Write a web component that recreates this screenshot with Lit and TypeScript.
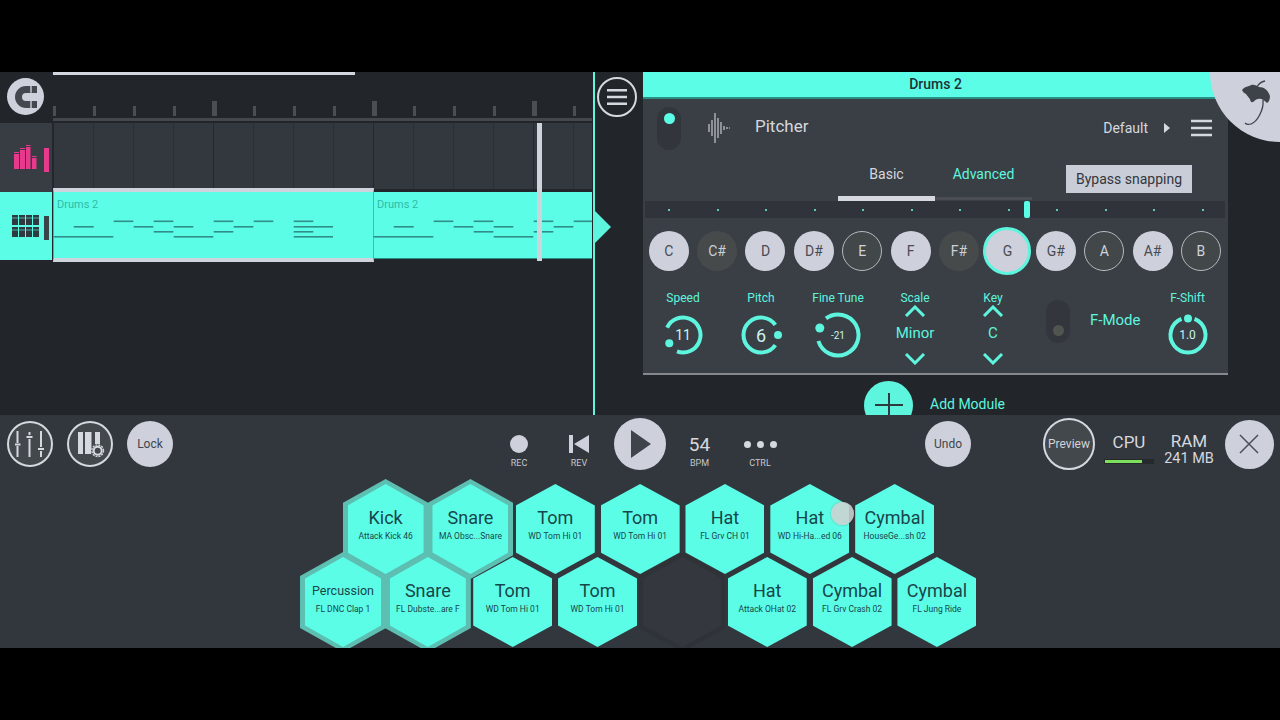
import { LitElement, html, css, svg } from "lit";
import { customElement } from "lit/decorators.js";

const NOTES: [number, number, number][] = [
  [220.5, 113.7, 133.3], [220.5, 153.7, 173.3], [220.5, 213.7, 233.3], [220.5, 253.7, 273.3], [220.5, 293.7, 313.3],
  [226, 73.7, 93.7], [226, 133.7, 153.3], [226, 173.7, 193.3], [226, 233.7, 253.3], [226, 293.7, 333],
  [231, 153.7, 173.3], [231, 213.7, 233.3], [231, 293.7, 313.3],
  [236, 53.7, 113.3], [236, 173.7, 213.3], [236, 293.7, 333],
];

const KEYS: [string, string][] = [
  ["C", "on"], ["C#", "dim"], ["D", "on"], ["D#", "on"], ["E", "out"], ["F", "on"],
  ["F#", "dim"], ["G", "sel"], ["G#", "on"], ["A", "out"], ["A#", "on"], ["B", "out"],
];

const ROW1: [string, string, boolean][] = [
  ["Kick", "Attack Kick 46", true], ["Snare", "MA Obsc...Snare", true], ["Tom", "WD Tom Hi 01", false],
  ["Tom", "WD Tom Hi 01", false], ["Hat", "FL Grv CH 01", false], ["Hat", "WD Hi-Ha...ed 06", false],
  ["Cymbal", "HouseGe...sh 02", false],
];
const ROW2: ([string, string, boolean] | null)[] = [
  ["Percussion", "FL DNC Clap 1", true], ["Snare", "FL Dubste...are F", true], ["Tom", "WD Tom Hi 01", false],
  ["Tom", "WD Tom Hi 01", false], null, ["Hat", "Attack OHat 02", false], ["Cymbal", "FL Grv Crash 02", false],
  ["Cymbal", "FL Jung Ride", false],
];

const hamburger = html`<svg width="21" height="18" viewBox="0 0 21 18"><path d="M0 2h21M0 9h21M0 16h21" stroke="#d5d8df" stroke-width="2.6"/></svg>`;

const up = html`<svg width="22" height="12" viewBox="0 0 22 12"><path d="M2 11 11 2l9 9" fill="none" stroke="#5ef5df" stroke-width="3"/></svg>`;
const down = html`<svg width="22" height="12" viewBox="0 0 22 12"><path d="M2 1l9 9 9-9" fill="none" stroke="#5ef5df" stroke-width="3"/></svg>`;

function knob(size: number, r: number, sw: number, from: number, to: number, dotA: number, dotD: number, dotR: number, cls: string, value: string, top: number) {
  const c = size / 2;
  const p = (a: number, d: number) => [c + d * Math.sin((a * Math.PI) / 180), c - d * Math.cos((a * Math.PI) / 180)];
  const [x1, y1] = p(from, r);
  const [x2, y2] = p(to, r);
  const [dx, dy] = p(dotA, dotD);
  const large = (to - from + 360) % 360 > 180 ? 1 : 0;
  return html`<div class="knob" style="width:${size}px;height:${size}px;margin-top:${top}px">
    <svg width=${size} height=${size} viewBox="0 0 ${size} ${size}">
      <path d="M${x1} ${y1}A${r} ${r} 0 ${large} 1 ${x2} ${y2}" fill="none" stroke="#5ef5df" stroke-width=${sw}/>
      <circle cx=${dx} cy=${dy} r=${dotR} fill="#5ef5df"/>
    </svg>
    <span class=${cls}>${value}</span>
  </div>`;
}

@customElement("app-root")
export class AppRoot extends LitElement {
  static styles = css`
    :host { display: block; box-sizing: border-box; padding-top: 72px; background: #000; font-family: Roboto, "Liberation Sans", sans-serif; width: 1280px; height: 720px; overflow: hidden; }
    .stage { position: relative; height: 576px; overflow: hidden; background: #22262b; }
    .upper { display: flex; height: 343px; overflow: hidden; background: #22262b; }

    .timeline { width: 592px; margin-right: 1px; flex: none; position: relative; display: flex; flex-direction: column; overflow: hidden; }
    .ruler-row { display: flex; height: 51px; flex: none; }
    .magnet-cell { width: 53px; flex: none; display: flex; align-items: flex-start; padding: 6px 0 0 7px; box-sizing: border-box; }
    .magnet { width: 37px; height: 37px; border-radius: 50%; background: #ced1dc; display: flex; align-items: center; justify-content: center; }
    .ruler { flex: 1; min-width: 0; overflow: hidden; display: flex; flex-direction: column; background: #22262b; }
    .loopbar { width: 302px; height: 3px; background: #d4d7df; flex: none; }
    .ticks { display: flex; height: 41px; align-items: flex-end; flex: none; }
    .tickcell { width: 40px; flex: none; }
    .tick { width: 2.5px; height: 10.500px; background: #4b4f54; }
    .tick.big { width: 5px; height: 15.500px; margin-left: -1.500px; }
    .rule { height: 3px; margin-top: 2px; background: #44484d; flex: none; }

    .track { display: flex; height: 69px; flex: none; }
    .head { width: 52px; flex: none; background: #383c43; display: flex; align-items: center; gap: 5px; padding-left: 12px; box-sizing: border-box; }
    .grid { flex: 1; margin-left: 1px; height: 66px; background-color: #33373e;
      background-image: linear-gradient(90deg, #24272c 1px, transparent 1px), linear-gradient(90deg, #2b2e34 1px, transparent 1px);
      background-size: 160px 100%, 40px 100%; }
    .track.cy { height: 72px; margin-top: -1px; }
    .track.cy .head { background: #5cfde6; height: 68px; margin-top: 1px; }
    .clips { flex: 1; min-width: 0; position: relative; margin-left: 1px; display: flex; }
    .clip { width: 321px; flex: none; height: 74px; margin-top: -3px; box-sizing: border-box; border-top: 4px solid #cfd3dc; border-bottom: 4px solid #cfd3dc; background: #5cfde6; border-left: 1px solid #7c9a98; border-right: 1px solid #49b8a8; color: #2fbba9; font-size: 11px; padding: 6px 0 0 3px; }
    .clip.b { flex: 1; width: auto; min-width: 0; box-sizing: border-box; height: 67px; margin-top: 1px; padding: 6px 0 0 3px; border-top: none; border-left: none; border-right: none; border-bottom: 1px solid #2a8e83; }
    .notes { position: absolute; left: 0; top: -3px; }
    .playhead { position: absolute; left: 537px; top: 51px; width: 5px; height: 138px; background: #cfd3dc; }

    .divider { width: 2px; flex: none; background: #5ef5df; }
    .side { flex: 1; display: flex; min-width: 0; }
    .gutter { width: 48px; flex: none; padding: 5px 0 0 2px; box-sizing: border-box; }
    .menu { width: 40px; height: 40px; box-sizing: border-box; border: 2px solid #d5d8df; border-radius: 50%; display: flex; align-items: center; justify-content: center; }
    .menu svg { width: 20px; }
    .mid { width: 585px; flex: none; display: flex; flex-direction: column; }
    .panel { height: 303px; flex: none; background: #3a3f46; border-bottom: 2px solid #85888c; box-sizing: border-box; display: flex; flex-direction: column; color: #d5d8df; }
    .title { height: 27px; flex: none; background: #5cfde6; border-bottom: 2px solid #2a8e83; padding-bottom: 1px; box-sizing: border-box; color: #1d3336; font-size: 14px; font-weight: 500; display: flex; align-items: center; justify-content: center; }
    .modhead { height: 54px; flex: none; display: flex; align-items: center; padding: 3px 16px 0 14px; box-sizing: border-box; }
    .toggle { width: 24px; height: 43px; border-radius: 12px; background: #32363c; flex: none; display: flex; flex-direction: column; align-items: center; padding-top: 6px; box-sizing: border-box; }
    .toggle i { width: 11px; height: 11px; border-radius: 50%; background: #5cfde6; }
    .modhead .toggle { margin-top: 1px; }
    .toggle.off { background: #33373d; padding-top: 25px; margin: 16px 0 0 13px; }
    .toggle.off i { background: #51554f; }
    .wave { margin-left: 27px; flex: none; }
    .name { margin: -3px 0 0 25px; font-size: 17px; }
    .default { margin-left: auto; font-size: 14px; }
    .tri { margin-left: 16px; margin-right: 21px; width: 0; height: 0; border-left: 6px solid #d5d8df; border-top: 5.5px solid transparent; border-bottom: 5.5px solid transparent; }
    .tabs { height: 48px; flex: none; display: flex; align-items: flex-start; padding-left: 195px; }
    .tab { width: 97px; height: 47px; box-sizing: border-box; border-bottom: 3px solid #4a4e54; display: flex; align-items: center; justify-content: center; font-size: 14px; padding-bottom: 2px; color: #5ef5df; }
    .tab.on { height: 48px; color: #d5d8df; border-bottom: 5px solid #d5d8df; padding-bottom: 1px; }
    .bypass { margin: 12px 0 0 34px; width: 126px; height: 28px; background: #c9cdd7; color: #32363c; font-size: 14px; display: flex; align-items: center; justify-content: center; }
    .strip { height: 17px; flex: none; margin: 0 3px 0 2px; background: #30343a; position: relative; display: grid; grid-template-columns: repeat(12, 48.5px); }
    .strip span { display: flex; align-items: center; justify-content: center; }
    .strip span::before { content: ""; width: 2px; height: 2px; background: #5ec9b9; }
    .strip .handle { position: absolute; left: 379px; top: 0; width: 6px; height: 17px; background: #5cfde6; border-radius: 2px; }
    .keys { display: grid; grid-template-columns: repeat(12, 48.4px); padding-left: 1.5px; height: 66px; flex: none; align-items: center; justify-items: center; }
    .key { width: 40px; height: 40px; box-sizing: border-box; border-radius: 50%; display: flex; align-items: center; justify-content: center; font-size: 14px; }
    .key.on { background: #ced1dc; color: #474b53; }
    .key.dim { background: #464a4b; color: #cdd0d6; }
    .key.out { background: #42474a; border: 1px solid #b6b9be; color: #d0d3d9; }
    .key.sel { width: 48px; height: 48px; background: #ced1dc; border: 3px solid #5ef5df; color: #474b53; }
    .ctrls { flex: 1; display: flex; color: #5ef5df; }
    .c { flex: none; display: flex; flex-direction: column; align-items: center; font-size: 12px; }
    .c label { height: 14px; line-height: 14px; margin-top: 7px; white-space: nowrap; }
    .knob { position: relative; display: flex; align-items: center; justify-content: center; }
    .knob svg { position: absolute; inset: 0; }
    .knob span { color: #c9f3ec; position: relative; }
    .v14 { font-size: 14px; }
    .v17 { font-size: 18px; }
    .v10 { font-size: 10px; }
    .v12 { font-size: 12px; }
    .stepper { display: flex; flex-direction: column; align-items: center; }
    .stepper b { font-weight: 400; font-size: 15px; line-height: 18px; margin: 7px 0 11px; }
    .fmode { font-size: 15px; margin: 27px 0 0 20px; white-space: nowrap; line-height: 18px; width: 50px; flex: none; }
    .addrow { display: flex; align-items: flex-start; height: 40px; padding: 6px 0 0 221px; color: #5ef5df; font-size: 14px; }
    .plus { width: 49px; height: 49px; border-radius: 50%; background: #5ef5df; flex: none; display: flex; align-items: flex-start; justify-content: center; }
    .addrow span { margin: 15px 0 0 17px; }

    .fruit { position: absolute; right: 0; top: 0; width: 70px; height: 70px; background: #ced1dc; border-bottom-left-radius: 70px; }
    .arrow { position: absolute; left: 594px; top: 138px; width: 0; height: 0; border-left: 17px solid #5ef5df; border-top: 17px solid transparent; border-bottom: 17px solid transparent; }

    .lower { height: 233px; background: #32373d; }
    .tb { display: flex; height: 58px; align-items: center; color: #c4c7cc; }
    .rnd { flex: none; box-sizing: border-box; border-radius: 50%; width: 46px; height: 46px; display: flex; align-items: center; justify-content: center; font-size: 12px; }
    .rnd.light { background: #ced1dc; color: #40454c; }
    .rnd.ring { border: 2px solid #d5d8df; background: #43484c; color: #d0d3d9; }
    .col { flex: none; width: 40px; align-self: stretch; display: flex; flex-direction: column; align-items: center; padding-top: 20px; box-sizing: border-box; }
    .col .ic { height: 18px; display: flex; align-items: center; justify-content: center; gap: 6px; }
    .col small { font-size: 9px; line-height: 10px; margin-top: 5px; color: #c4c7cc; }
    .rec { width: 18px; height: 18px; border-radius: 50%; background: #ced1dc; }
    .dot { width: 7px; height: 7px; border-radius: 50%; background: #d5d8df; }
    .bpm { font-size: 19px; color: #d5d8df; }
    .stat { flex: none; display: flex; flex-direction: column; align-items: center; color: #d5d8df; margin-top: 10px; }
    .stat .t { font-size: 17px; line-height: 20px; }
    .meter { width: 50px; height: 5px; margin: 7px 0 3px; background: #25292c; display: flex; align-items: center; padding-left: 1px; box-sizing: border-box; }
    .meter i { display: block; width: 37px; height: 3px; background: #7ce05c; }
    .stat .m { font-size: 14.5px; line-height: 17px; margin-top: -1px; }

    .hexrow { display: flex; height: 73px; }
    .r1 { margin: 11px 0 0 343.2px; }
    .r2 { margin-left: 300.6px; }
    .cell { width: 84.85px; height: 90px; flex: none; display: flex; align-items: center; justify-content: center; }
    .hex { width: 79px; height: 90px; flex: none; background: #5cfde6; clip-path: polygon(50% 0, 100% 24%, 100% 76%, 50% 100%, 0 76%, 0 24%); display: flex; flex-direction: column; align-items: center; padding-top: 22px; box-sizing: border-box; color: #17464a; }
    .hex b { font-weight: 400; font-size: 18px; line-height: 24px; white-space: nowrap; }
    .hex b.sm { font-size: 12.5px; }
    .hex small { font-size: 8.5px; line-height: 12px; white-space: nowrap; }
    .outer { width: 86px; height: 100px; flex: none; background: #5dbeb2; clip-path: polygon(50% 0, 100% 24%, 100% 76%, 50% 100%, 0 76%, 0 24%); display: flex; align-items: center; justify-content: center; }
    .outer .hex { width: 76px; }
    .outer.empty { background: #2f3338; }
    .outer.empty .hex { background: #34383e; width: 78px; }
    .touch { position: absolute; left: 831px; top: 430px; width: 23px; height: 23px; border-radius: 50%; background: rgba(206, 210, 210, .88); box-shadow: 0 0 2px rgba(0,0,0,.3); }
  `;

  private notes(offset: number) {
    return NOTES.map(([y, a, b]) => svg`<rect x=${a - 53 + offset} y=${y - 188} width=${b - a} height="1.6" fill="#2f8f86"/>`);
  }

  private hex(h: [string, string, boolean] | null) {
    if (!h) return html`<div class="cell"><div class="outer empty"><div class="hex"></div></div></div>`;
    const [t, s, sel] = h;
    const body = html`<div class="hex"><b class=${t.length > 8 ? "sm" : ""}>${t}</b><small>${s}</small></div>`;
    return html`<div class="cell">${sel ? html`<div class="outer">${body}</div>` : body}</div>`;
  }

  render() {
    const ticks = Array.from({ length: 14 }, (_, i) => html`<div class="tickcell"><div class=${(i % 4 === 0 && i > 0) ? "tick big" : "tick"}></div></div>`);
    return html`
      <div class="stage">
        <div class="upper">
          <div class="timeline">
            <div class="ruler-row">
              <div class="magnet-cell"><div class="magnet">
                <svg width="24" height="24" viewBox="0 0 24 24"><path d="M23 1H12A11 11 0 0 0 12 23H23V16H12A4 4 0 0 1 12 8H23Z" fill="#44484e"/><path d="M17 0.5v7.3M17 16v7.5" stroke="#ced1dc" stroke-width="1.4"/></svg>
              </div></div>
              <div class="ruler">
                <div class="loopbar"></div>
                <div class="ticks">${ticks}</div>
                <div class="rule"></div>
              </div>
            </div>
            <div class="track">
              <div class="head">
                <svg width="27" height="24" viewBox="0 0 27 24" style="margin-top:-2px" fill="#e73a8d"><path d="M2 9h5v15H2zM2 7h5v1H2zM8 5h5v19H8zM8 3h5v1H8zM14 2h4.500v22H14zM14 0h4.500v1H14zM20 13h4.500v11H20zM20 11h4.500v1H20z"/></svg>
                <svg width="5" height="24" viewBox="0 0 5 24" style="margin-top:5px"><rect width="5" height="24" fill="#e73a8d"/></svg>
              </div>
              <div class="grid"></div>
            </div>
            <div class="track cy">
              <div class="head">
                <svg width="27" height="22" viewBox="0 0 27 22" fill="#2f3a40"><path d="M0 0h6v10H0zM7 0h6v10H7zM14 0h6v10h-6zM21 0h6v10h-6zM0 12h6v10H0zM7 12h6v10H7zM14 12h6v10h-6zM21 12h6v10h-6z"/><path d="M0 3h27M0 15h27" stroke="#5cfde6" stroke-width=".6"/></svg>
                <svg width="5" height="24" viewBox="0 0 5 24" style="margin-top:4px"><rect width="5" height="24" fill="#3a434a"/></svg>
              </div>
              <div class="clips">
                <div class="clip">Drums 2</div>
                <div class="clip b">Drums 2</div>
                <svg class="notes" width="539" height="74" viewBox="0 0 539 74">${this.notes(0)}${this.notes(320)}</svg>
              </div>
            </div>
            <div class="playhead"></div>
          </div>
          <div class="divider"></div>
          <div class="side">
            <div class="gutter"><div class="menu">${hamburger}</div></div>
            <div class="mid">
              <div class="panel">
                <div class="title">Drums 2</div>
                <div class="modhead">
                  <div class="toggle"><i></i></div>
                  <svg class="wave" width="22" height="30" viewBox="0 0 22 30" stroke="#c5c8ce" stroke-width="1.2"><path d="M1 11v8M4 7v16M7 0v30M10 5v20M13 9v12M16 13v4M19 14v2M21.500 14.500v1"/></svg>
                  <div class="name">Pitcher</div>
                  <div class="default">Default</div>
                  <div class="tri"></div>
                  ${hamburger}
                </div>
                <div class="tabs">
                  <div class="tab on">Basic</div>
                  <div class="tab">Advanced</div>
                  <div class="bypass">Bypass snapping</div>
                </div>
                <div class="strip">
                  ${Array.from({ length: 12 }, () => html`<span></span>`)}
                  <div class="handle"></div>
                </div>
                <div class="keys">
                  ${KEYS.map(([k, s]) => html`<div class="key ${s}">${k}</div>`)}
                </div>
                <div class="ctrls">
                  <div class="c" style="width:80px"><label>Speed</label>${knob(44, 17.5, 4, -65, 200, 239, 16, 4, "v14", "11", 8)}</div>
                  <div class="c" style="width:76px"><label>Pitch</label>${knob(44, 17.5, 4, 125, 55, 90, 17, 4, "v17", "6", 8)}</div>
                  <div class="c" style="width:78px"><label>Fine Tune</label>${knob(48, 20.5, 4, -36, 253, 291, 19.5, 4.5, "v10", "-21", 6)}</div>
                  <div class="c" style="width:76px"><label>Scale</label>
                    <div class="stepper">${up}<b>Minor</b>${down}</div>
                  </div>
                  <div class="c" style="width:80px"><label>Key</label>
                    <div class="stepper">${up}<b>C</b>${down}</div>
                  </div>
                  <div class="toggle off"><i></i></div>
                  <div class="fmode">F-Mode</div>
                  <div class="c" style="width:60px;margin-left:17.500px"><label>F-Shift</label>${knob(44, 17.5, 4, 22, 338, 0, 16.5, 4, "v12", "1.0", 8)}</div>
                </div>
              </div>
              <div class="addrow">
                <div class="plus"><svg width="30" height="34" viewBox="0 0 30 34" style="margin-top:11px"><path d="M1 13h28M15 1v33" stroke="#2e3a3d" stroke-width="2"/></svg></div>
                <span>Add Module</span>
              </div>
            </div>
          </div>
        </div>
        <div class="lower">
          <div class="tb">
            <div class="rnd ring" style="margin-left:7px">
              <svg width="30" height="28" viewBox="0 0 30 28" stroke="#d5d8df" stroke-width="2"><path d="M2.500 1v12M2.500 16v11M14.500 2v3M14.500 9v18M26 1v16M26 21v6"/><path d="M-.5 14.500h6M11.500 7h6M23 19h6"/></svg>
            </div>
            <div class="rnd ring" style="margin-left:14px">
              <svg width="30" height="32" viewBox="0 0 30 32"><path d="M3 4h5v22H3zM10 4h6.500v17h-.500v5h-6zM20 4h5v12h-5z" fill="#d5d8df"/><circle cx="22.700" cy="22.700" r="4" fill="none" stroke="#d5d8df" stroke-width="2"/><circle cx="22.700" cy="22.700" r="5.800" fill="none" stroke="#d5d8df" stroke-width="1.400" stroke-dasharray="2 1.040"/></svg>
            </div>
            <div class="rnd light" style="margin-left:14px">Lock</div>
            <div class="col" style="margin-left:326px"><div class="ic"><div class="rec"></div></div><small>REC</small></div>
            <div class="col" style="margin-left:20px"><div class="ic"><svg width="22" height="18" viewBox="0 0 22 18" fill="#ced1dc"><path d="M1 0h4v18H1zM21 0v18L6 9z"/></svg></div><small>REV</small></div>
            <div class="rnd light" style="margin-left:15px;width:52px;height:52px"><svg width="20" height="28" viewBox="0 0 20 28" style="margin-left:2px"><path d="M0 0 20 14 0 28Z" fill="#3f444c"/></svg></div>
            <div class="col" style="margin-left:13.500px"><div class="ic"><span class="bpm">54</span></div><small>BPM</small></div>
            <div class="col" style="margin-left:20.500px"><div class="ic"><i class="dot"></i><i class="dot"></i><i class="dot"></i></div><small>CTRL</small></div>
            <div class="rnd light" style="margin-left:145px">Undo</div>
            <div class="rnd ring" style="margin-left:72px;width:52px;height:52px">Preview</div>
            <div class="stat" style="margin-left:9px;width:50px"><span class="t">CPU</span><div class="meter"><i></i></div></div>
            <div class="stat" style="margin-left:5px;width:60px"><span class="t">RAM</span><span class="m">241 MB</span></div>
            <div class="rnd light" style="margin-left:5.500px;width:49px;height:49px"><svg width="20" height="20" viewBox="0 0 20 20"><path d="M1 1l18 18M19 1 1 19" stroke="#4a4e56" stroke-width="1.500"/></svg></div>
          </div>
          <div class="hexrow r1">${ROW1.map((h) => this.hex(h))}</div>
          <div class="hexrow r2">${ROW2.map((h) => this.hex(h))}</div>
        </div>
        <div class="arrow"></div>
        <div class="fruit">
          <svg width="70" height="70" viewBox="0 0 70 70"><path d="M32 18C35 14 38 15 41 13C44 12 47 14 49 15C54 15 58 18 60 24C60 27 59 30 57 31C54 28 51 26 48 27C45 27 44 31 41 30C40 26 37 24 36 22C34 21 33 20 32 18Z" fill="#3e434a"/><path d="M47 15C48 13 50 10 55 9M53 28C54 38 47 50 41 52C38 53 36 52 35 51" fill="none" stroke="#3e434a" stroke-width="1.300"/></svg>
        </div>
        <div class="touch"></div>
      </div>
    `;
  }
}
